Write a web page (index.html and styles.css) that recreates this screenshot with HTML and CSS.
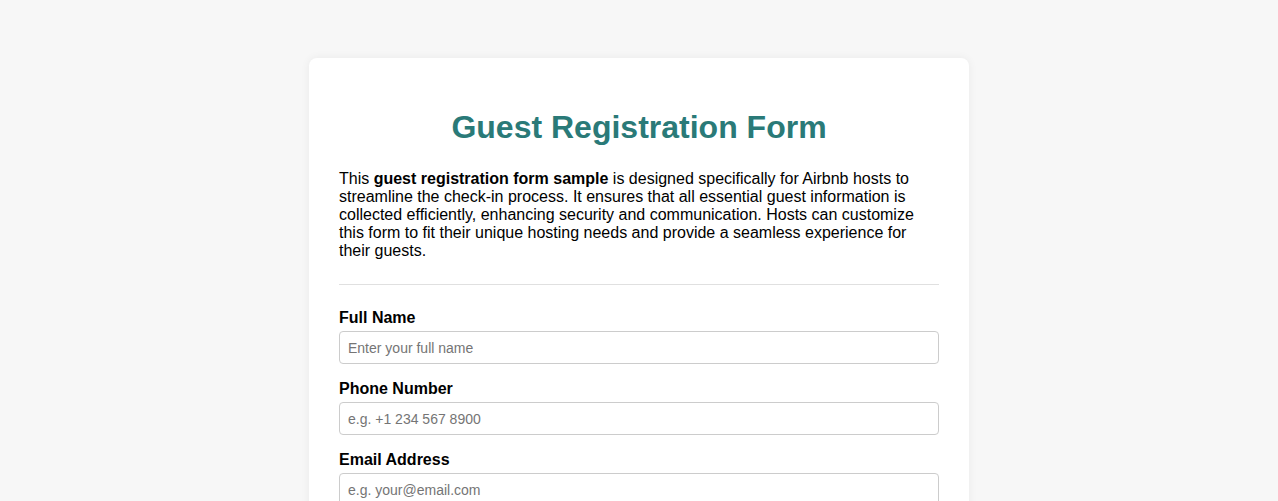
FILE: index.html
```html
<!DOCTYPE html>
<html lang="en">
<head>
<meta charset="utf-8">
<title>Guest Registration Form</title>
<link rel="stylesheet" href="styles.css">
</head>
<body>
<div class="page">
  <div class="card">
    <h1 class="title">Guest Registration Form</h1>
    <p class="intro">This <strong>guest registration form sample</strong> is designed specifically for Airbnb hosts to streamline the check-in process. It ensures that all essential guest information is collected efficiently, enhancing security and communication. Hosts can customize this form to fit their unique hosting needs and provide a seamless experience for their guests.</p>
    <hr class="divider">
    <form class="form">
      <div class="field">
        <label class="label" for="name">Full Name</label>
        <input class="input" id="name" type="text" placeholder="Enter your full name">
      </div>
      <div class="field">
        <label class="label" for="phone">Phone Number</label>
        <input class="input" id="phone" type="tel" placeholder="e.g. +1 234 567 8900">
      </div>
      <div class="field">
        <label class="label" for="email">Email Address</label>
        <input class="input" id="email" type="email" placeholder="e.g. your@email.com">
      </div>
    </form>
  </div>
</div>
</body>
</html>
```

FILE: styles.css
```css
html, body {
  margin: 0;
  padding: 0;
}
body {
  background: #f7f7f7;
  font-family: "Liberation Sans", Arial, sans-serif;
  color: #000;
}
.page {
  padding-top: 58px;
  display: flex;
  justify-content: center;
}
.card {
  width: 600px;
  background: #fff;
  border-radius: 8px;
  padding: 30px;
  box-shadow: 0 0 10px rgba(0, 0, 0, 0.06);
}
.title {
  color: #2a7a78;
  font-size: 32px;
  font-weight: bold;
  text-align: center;
  margin: 21px 0 24px;
}
.intro {
  font-size: 16px;
  margin: 0;
}
.divider {
  border: 0;
  border-top: 1px solid #e0e0e0;
  margin: 24px 0 24px;
}
.form {
  display: flex;
  flex-direction: column;
  gap: 16px;
}
.field {
  display: flex;
  flex-direction: column;
  gap: 4px;
}
.label {
  font-size: 16px;
  font-weight: bold;
}
.input {
  font-family: "Liberation Sans", Arial, sans-serif;
  font-size: 14px;
  padding: 7.5px 8px;
  border: 1px solid #ccc;
  border-radius: 4px;
  outline: none;
}
.input::placeholder {
  color: #757575;
}
```
